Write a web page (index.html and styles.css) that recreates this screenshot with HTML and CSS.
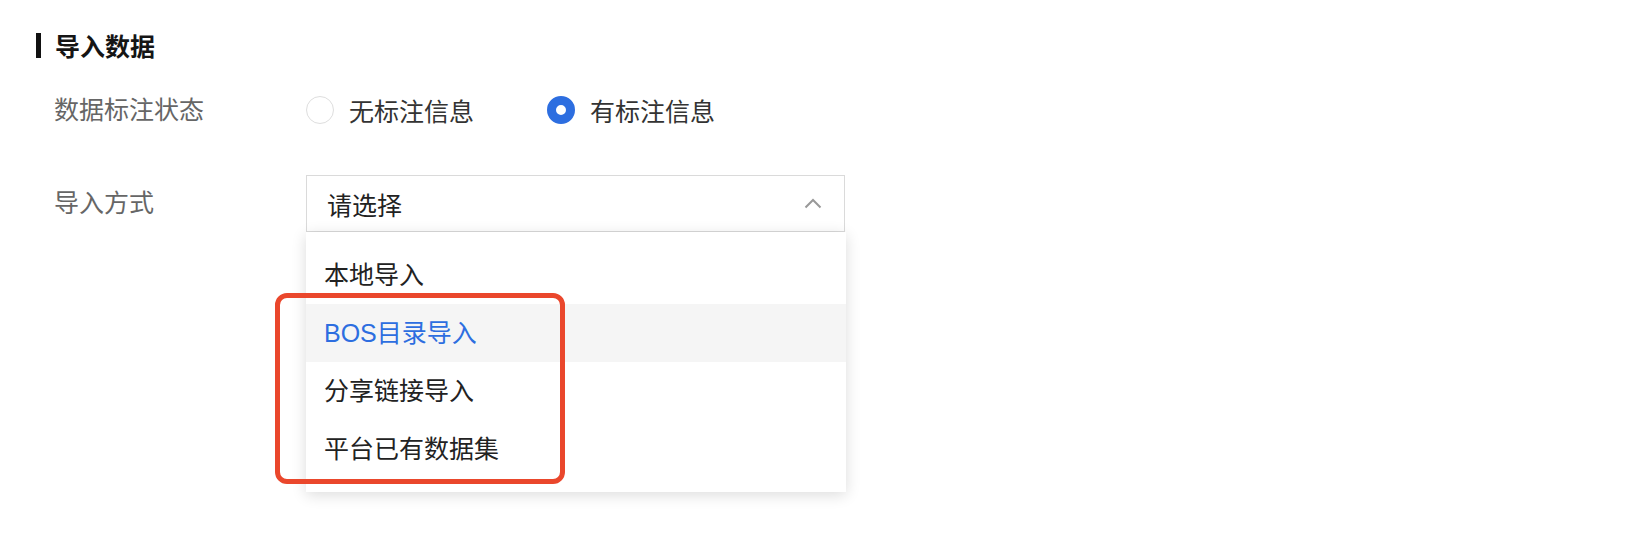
FILE: index.html
```html
<!DOCTYPE html>
<html lang="zh-CN">
<head>
    <meta charset="utf-8">
    <title>导入数据</title>
    <link rel="stylesheet" href="styles.css">
</head>
<body>
    <div class="page">
        <h2 class="section_title"><span class="title_bar"></span>导入数据</h2>

        <div class="form_row row_radio">
            <div class="form_label">数据标注状态</div>
            <div class="form_field radio_group">
                <label class="radio"><span class="radio_dot"></span>无标注信息</label>
                <label class="radio checked"><span class="radio_dot"></span>有标注信息</label>
            </div>
        </div>

        <div class="form_row row_select">
            <div class="form_label">导入方式</div>
            <div class="form_field">
                <div class="select_wrap">
                    <div class="select">
                        <span class="select_text">请选择</span>
                        <svg class="select_arrow" width="18" height="11" viewBox="0 0 18 11">
                            <path d="M1.5 9.5 L9 2 L16.5 9.5" fill="none" stroke="#999" stroke-width="2"/>
                        </svg>
                    </div>
                    <div class="dropdown">
                        <div class="option">本地导入</div>
                        <div class="option hover">BOS目录导入</div>
                        <div class="option">分享链接导入</div>
                        <div class="option">平台已有数据集</div>
                        <div class="mark_box"></div>
                    </div>
                </div>
            </div>
        </div>
    </div>
</body>
</html>
```

FILE: styles.css
```css
html, body {
    min-height: 100%;
}
body {
    margin: 0;
    background: #fff;
    font-family: "Liberation Sans", "Noto Sans CJK SC", sans-serif;
    font-size: 25px;
    color: #333;
}
.page {
    padding: 32px 0 46px 36px;
}
.section_title {
    display: flex;
    align-items: center;
    margin: 0;
    height: 26px;
    font-size: 25px;
    font-weight: bold;
    color: #151515;
}
.title_bar {
    width: 5px;
    height: 25px;
    background: #111;
    margin-right: 14px;
}
.form_row {
    display: flex;
}
.row_radio {
    margin-top: 32px;
    height: 40px;
    align-items: center;
}
.row_select {
    margin-top: 45px;
}
.form_label {
    width: 270px;
    padding-left: 18px;
    box-sizing: border-box;
    color: #666;
    line-height: 40px;
}
.row_select .form_label {
    line-height: 57px;
}
.radio_group {
    display: flex;
    align-items: center;
    gap: 73px;
}
.radio {
    display: flex;
    align-items: center;
    gap: 15px;
    color: #333;
}
.radio_dot {
    width: 28px;
    height: 28px;
    border-radius: 50%;
    border: 1px solid #dedede;
    box-sizing: border-box;
    background: #fff;
}
.radio.checked .radio_dot {
    border: 9px solid #2d6ee0;
}
.select_wrap {
    width: 539px;
}
.select {
    display: flex;
    align-items: center;
    justify-content: space-between;
    height: 57px;
    box-sizing: border-box;
    border: 1px solid #dadada;
    padding: 0 22px 0 20px;
    color: #222;
}
.select_arrow {
    display: block;
}
.dropdown {
    position: relative;
    width: 540px;
    padding: 14px 0;
    background: #fff;
    box-shadow: 0 3px 14px rgba(0, 0, 0, 0.14);
}
.option {
    height: 58px;
    line-height: 58px;
    padding-left: 18px;
    color: #222;
}
.option.hover {
    background: #f5f5f5;
    color: #2d6ee0;
}
.mark_box {
    position: absolute;
    left: -31px;
    top: 61px;
    width: 290px;
    height: 191px;
    box-sizing: border-box;
    border: 5px solid #ea472c;
    border-radius: 12px;
}
```
